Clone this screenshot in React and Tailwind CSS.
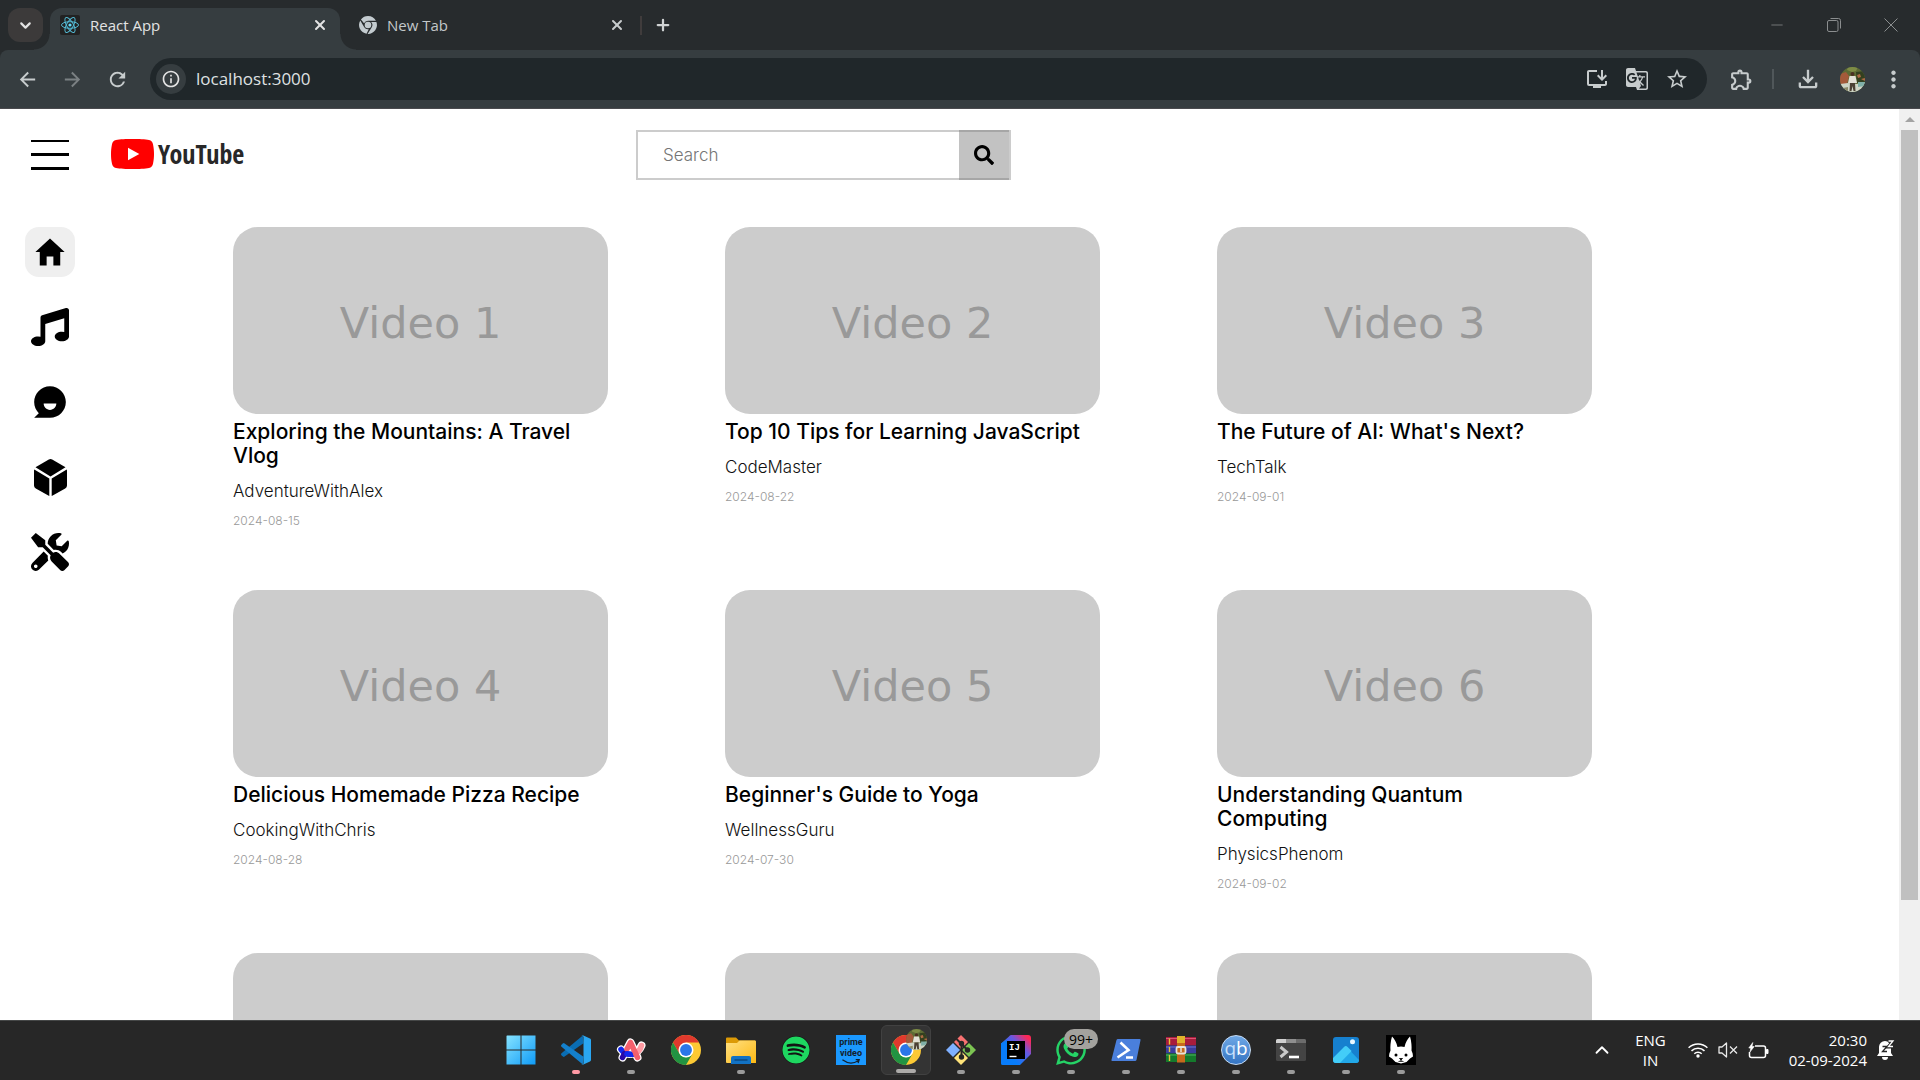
import { FaMusic, FaTools, FaSearch, FaSpotify, FaWhatsapp } from "react-icons/fa";
import {
  MdArrowBack,
  MdArrowForward,
  MdRefresh,
  MdInfoOutline,
  MdInstallDesktop,
  MdGTranslate,
  MdStarBorder,
  MdOutlineExtension,
  MdOutlineFileDownload,
  MdMoreVert,
} from "react-icons/md";
import { IoMdHome } from "react-icons/io";
import { RiChatSmile3Fill } from "react-icons/ri";
import { ChevronDown, ChevronUp, X, Plus, Minus } from "lucide-react";

const videos = [
  { id: 1, label: "Video 1", title: "Exploring the Mountains: A Travel Vlog", author: "AdventureWithAlex", date: "2024-08-15" },
  { id: 2, label: "Video 2", title: "Top 10 Tips for Learning JavaScript", author: "CodeMaster", date: "2024-08-22" },
  { id: 3, label: "Video 3", title: "The Future of AI: What's Next?", author: "TechTalk", date: "2024-09-01" },
  { id: 4, label: "Video 4", title: "Delicious Homemade Pizza Recipe", author: "CookingWithChris", date: "2024-08-28" },
  { id: 5, label: "Video 5", title: "Beginner's Guide to Yoga", author: "WellnessGuru", date: "2024-07-30" },
  { id: 6, label: "Video 6", title: "Understanding Quantum Computing", author: "PhysicsPhenom", date: "2024-09-02" },
  { id: 7 },
  { id: 8 },
  { id: 9 },
];

function ReactIcon() {
  return (
    <svg viewBox="0 0 20 20" className="size-5 rounded-[2px] bg-[#222222]" fill="none" stroke="#53b9d3" strokeWidth="1">
      <ellipse cx="10" cy="10" rx="8.5" ry="3.3" />
      <ellipse cx="10" cy="10" rx="8.5" ry="3.3" transform="rotate(60 10 10)" />
      <ellipse cx="10" cy="10" rx="8.5" ry="3.3" transform="rotate(120 10 10)" />
      <circle cx="10" cy="10" r="1.6" fill="#61dafb" stroke="none" />
    </svg>
  );
}

function ChromeMono() {
  return (
    <svg viewBox="0 0 24 24" className="size-[18px]" fill="#c3cbcf">
      <circle cx="12" cy="12" r="4.4" />
      <path d="M12 0a12 12 0 0 1 10.6 6.4H12A5.8 5.8 0 0 0 6.7 9.8L2.6 4.6A12 12 0 0 1 12 0z" />
      <path d="M1.700 5.900L7 15a5.800 5.800 0 0 0 6 2.700l-3 6.100A12 12 0 0 1 1.700 5.900z" />
      <path d="M23.200 7.900a12 12 0 0 1-11.700 16.100L17 14.900a5.800 5.800 0 0 0-.8-7z" />
    </svg>
  );
}

function Cube() {
  return (
    <svg viewBox="0 0 33 37" className="h-[37px] w-[33px]" fill="black">
      <path d="M14.800 .5a3.500 3.500 0 0 1 3.400 0L31.500 8.300 16.500 17.400 1.500 8.300z" />
      <path d="M.3 10.400L15.300 19.500V37a4 4 0 0 1-1-.4L1.800 29.400A3.500 3.500 0 0 1 0 26.400V11.800c0-.5.1-1 .3-1.400z" />
      <path d="M32.700 10.400L17.700 19.500V37a4 4 0 0 0 1-.4l12.500-7.200a3.500 3.500 0 0 0 1.800-3V11.800c0-.5-.1-1-.3-1.400z" />
    </svg>
  );
}

function Avatar({ className }) {
  return (
    <svg viewBox="0 0 25 25" className={className}>
      <clipPath id="face">
        <circle cx="12.500" cy="12.500" r="12.500" />
      </clipPath>
      <g clipPath="url(#face)">
        <rect width="25" height="25" fill="#5d6b35" />
        <path d="M0 7l6-2 3 4-2 8H0z" fill="#a45a3a" />
        <path d="M8 0h10l-2 4-4 1-5-2z" fill="#7d8b45" />
        <path d="M16 5l9-1v11l-8 1z" fill="#33401f" />
        <path d="M17 8l3-1 1 3-3 1zM21 12l4-1v3z" fill="#b06a45" />
        <path d="M0 17l8-1 9 1 8-2v10H0z" fill="#cfd5c6" />
        <path d="M18 15h7v4l-7 1z" fill="#7fb0a8" />
        <path d="M3 21l5-1v5H5z" fill="#8b8a6a" />
        <circle cx="12.500" cy="7" r="2" fill="#4a3022" />
        <path d="M9.500 9h6l1.500 7h-9z" fill="#e2e0d6" />
        <path d="M10 16h5l.5 8h-2l-1-5-1 5h-2z" fill="#4b4034" />
      </g>
    </svg>
  );
}

function Windows() {
  return (
    <svg viewBox="0 0 30 30" className="size-[30px]">
      <defs>
        <linearGradient id="win" x1="0" y1="0" x2="1" y2="1" gradientUnits="objectBoundingBox">
          <stop offset="0" stopColor="#86e3ff" />
          <stop offset="1" stopColor="#0f9bf7" />
        </linearGradient>
      </defs>
      <path fill="url(#win)" d="M1 .5h13.500v14H.5V1zM15.500 .5h14v14h-14zM.5 15.500h14v14H.5zM15.500 15.500h14v14h-14z" />
    </svg>
  );
}

function VSCode() {
  return (
    <svg viewBox="0 0 30 30" className="size-[30px]">
      <path d="M22.500 8.300L3.600 21.600a1.400 1.400 0 0 1-1.700-.1L.5 20.200a1.300 1.300 0 0 1 0-1.900L21.800 .4z" fill="#0a6db3" />
      <path d="M.5 11.700a1.300 1.300 0 0 1 0-1.900l1.400-1.300a1.400 1.400 0 0 1 1.700-.1L22.500 21.700l-.7 7.900z" fill="#1480cc" />
      <path d="M21.800 .3L29 3.500a1.800 1.800 0 0 1 1 1.700v19.600a1.800 1.800 0 0 1-1 1.700l-7.200 3.200c-.8.2-1-.2-1.400-.6 1 .9 2.100.2 2.100-1V2.200c0-1.300-1.200-2-2.100-1 .4-.4.600-.8 1.400-.9z" fill="#2aa7f2" />
    </svg>
  );
}

function Arc() {
  return (
    <svg viewBox="0 0 30 30" className="size-[30px]" fill="none" strokeLinecap="round" strokeLinejoin="round">
      <g stroke="#ffffff" strokeWidth="8">
        <path d="M6.500 22.500L14.500 7.500l7 15" />
        <path d="M5 14.500c5 7 16.500 6 20.500-4" />
      </g>
      <path d="M10 14h9v6h-9z" fill="#ffffff" />
      <path stroke="#ff9aa2" strokeWidth="5.500" d="M18 19c4-1.500 6.500-4.500 7.500-8.500" />
      <path stroke="#1429ee" strokeWidth="5.500" d="M5 14.500c3.500 4.500 8 5.500 13 4.500" />
      <path stroke="#2a0aa8" strokeWidth="5.500" d="M6.500 22.500l2-4" />
      <path stroke="#f5606c" strokeWidth="5.500" d="M11 14L14.500 7.500l7 15" />
      <path stroke="#1429ee" strokeWidth="5.500" d="M11 18.800l3 .6" />
    </svg>
  );
}

function Chrome() {
  return (
    <svg viewBox="0 0 48 48" className="size-[30px]">
      <circle cx="24" cy="24" r="24" fill="#fcc934" />
      <path d="M24 12h20.800A24 24 0 0 0 3.200 12l10.400 18z" fill="#e0392d" />
      <path d="M34.400 30L24 48A24 24 0 0 1 3.200 12l10.400 18c4 7 16 8 20.800 0z" fill="#229342" />
      <circle cx="24" cy="24" r="12" fill="#fff" />
      <circle cx="24" cy="24" r="9.500" fill="#2b76e8" />
    </svg>
  );
}

function Folder() {
  return (
    <svg viewBox="0 0 30 30" className="size-[30px]">
      <defs>
        <linearGradient id="fold" x1="0" y1="0" x2="1" y2="1">
          <stop offset="0" stopColor="#ffe083" />
          <stop offset="1" stopColor="#fdb913" />
        </linearGradient>
      </defs>
      <path d="M0 3.500a1 1 0 0 1 1-1h9l3 3h16v6H0z" fill="#dc9a06" />
      <path d="M0 8h11l2.500-2.500H29a1 1 0 0 1 1 1V28H1a1 1 0 0 1-1-1z" fill="url(#fold)" />
      <path d="M5 29v-6a2 2 0 0 1 2-2h16a2 2 0 0 1 2 2v6z" fill="#1272c4" />
      <path d="M8.500 25h13" stroke="#0a4377" strokeWidth="1.300" />
    </svg>
  );
}

function Prime() {
  return (
    <span className="flex size-[30px] flex-col items-center bg-[#1a98ff] pt-[2px] font-['Roboto'] text-[9px] leading-[11px] font-bold text-[#14202c]">
      <span>prime</span>
      <span>video</span>
      <svg viewBox="0 0 24 7" className="h-[6px] w-6 shrink-0" fill="none" stroke="#14202c" strokeWidth="1.500">
        <path d="M2 1c6 4.500 13 4.500 18.500 1M17.500 .8h4l-1.200 4" />
      </svg>
    </span>
  );
}

function ChromeProfile() {
  return (
    <span className="relative">
      <Chrome />
      <Avatar className="absolute -top-[6px] left-[15px] size-[21px]" />
    </span>
  );
}

function Git() {
  return (
    <svg viewBox="0 0 30 30" className="size-[30px]">
      <path d="M15 0l7 7-7 7-7-7z" fill="#f87171" />
      <path d="M7 8l7 7-7 7-7-7z" fill="#7fb0ff" />
      <path d="M23 8l7 7-7 7-7-7z" fill="#7cc452" />
      <path d="M15 16l7 7-7 7-7-7z" fill="#ffe37a" />
      <g stroke="#262626" strokeWidth="2" fill="#262626">
        <path d="M10.500 4l5 5v12M15.500 9l6 6" fill="none" />
        <circle cx="15.500" cy="8.500" r="1.700" />
        <circle cx="15.500" cy="22" r="1.700" />
        <circle cx="21.500" cy="15" r="1.700" />
      </g>
    </svg>
  );
}

function IntelliJ() {
  return (
    <svg viewBox="0 0 30 30" className="size-[30px]">
      <defs>
        <linearGradient id="ij" x1="0" y1="1" x2="1" y2="0">
          <stop offset=".3" stopColor="#087cfa" />
          <stop offset=".65" stopColor="#6b57e0" />
          <stop offset=".9" stopColor="#fe2857" />
        </linearGradient>
      </defs>
      <path d="M8 1.500A3 3 0 0 1 11 0h16a3 3 0 0 1 3 3v16L19 30H2a2 2 0 0 1-2-2V8.500z" fill="url(#ij)" />
      <path d="M0 8.500L6 5v20l9 5H2a2 2 0 0 1-2-2z" fill="#087cfa" />
      <rect x="6" y="6" width="18" height="18" fill="#000" />
      <path d="M8.500 21.500h7" stroke="#fff" strokeWidth="1.400" />
      <text x="8" y="14.500" fill="#fff" fontSize="9" fontWeight="700" fontFamily="Liberation Mono, monospace">IJ</text>
    </svg>
  );
}

function WhatsApp() {
  return (
    <span className="relative">
      <FaWhatsapp className="size-[34px] text-[#25d366]" />
      <span className="absolute -top-1 left-2.5 flex h-5 items-center rounded-full bg-[#a3a29e] px-[5px] text-[14px] text-black">99+</span>
    </span>
  );
}

function PowerShell() {
  return (
    <svg viewBox="0 0 30 30" className="size-[30px]">
      <path d="M7 4h21.500a1 1 0 0 1 1 1.300L25.500 25a1.500 1.500 0 0 1-1.400 1H1.500a1 1 0 0 1-1-1.300L5.500 5A1.500 1.500 0 0 1 7 4z" fill="#4a7fdc" />
      <path d="M9.500 7.500l8 7.500L6.500 22.500M15 22.500h7" stroke="#fff" strokeWidth="2.600" fill="none" />
    </svg>
  );
}

function WinRar() {
  return (
    <svg viewBox="0 0 30 30" className="size-[30px]">
      <rect y="2" width="30" height="8.500" fill="#a81c3c" />
      <rect y="10.500" width="30" height="8" fill="#3b3c9e" />
      <rect y="18.500" width="30" height="8.500" fill="#147a2c" />
      <path d="M0 3.500h30" stroke="#d95575" />
      <path d="M0 12h30" stroke="#6f73d0" />
      <path d="M0 20h30" stroke="#4bb45d" />
      <path d="M3.500 3.500v6M3.500 12v5M3.500 20v6" stroke="#e9c53a" strokeWidth="1.400" />
      <rect x="11" y="1" width="8" height="26.500" fill="#c76a1c" />
      <rect x="11" y="1" width="8" height="7" fill="#e0b32b" />
      <rect x="10.500" y="12" width="9" height="6.500" rx="1.500" fill="none" stroke="#e8e4da" strokeWidth="1.800" />
      <path d="M15 13v4" stroke="#e8e4da" strokeWidth="1.500" />
    </svg>
  );
}

function QBit() {
  return (
    <span className="flex size-[30px] items-center justify-center rounded-full border border-[#c6dcf5] bg-linear-to-b from-[#6fa8e6] to-[#3474c2] pb-1 text-[19px] leading-none">
      <span className="text-[#c9e0fb]">q</span>
      <span className="text-white">b</span>
    </span>
  );
}

function Terminal() {
  return (
    <svg viewBox="0 0 30 30" className="size-[30px]">
      <rect y="4" width="30" height="22" rx="1.500" fill="#444444" />
      <path d="M1.500 4H10v4H0V5.500A1.500 1.500 0 0 1 1.500 4z" fill="#d0d0d0" />
      <path d="M10 4h10v4H10z" fill="#8f8f8f" />
      <path d="M20 4h8.500A1.500 1.500 0 0 1 30 5.500V8H20z" fill="#6c6c6c" />
      <path d="M4.500 12l6 5-6 5" stroke="#c9c9c9" strokeWidth="3" fill="none" />
      <path d="M13 22h10" stroke="#fff" strokeWidth="2.600" />
    </svg>
  );
}

function Photos() {
  return (
    <svg viewBox="0 0 30 30" className="size-[30px]">
      <rect x="2" y="2" width="26" height="26" rx="3" fill="#1680cf" />
      <path d="M2.500 24.500L13 13a2.500 2.500 0 0 1 3.600 0L28 25a3 3 0 0 1-3 3H5a3 3 0 0 1-2.500-3.500z" fill="#22a8e8" />
      <path d="M2 23L13 12a2.500 2.500 0 0 1 3.600 0l4 4L9 28H5a3 3 0 0 1-3-3z" fill="#43cdf8" />
      <circle cx="21.500" cy="6.800" r="2.500" fill="#e9f7ff" />
    </svg>
  );
}

function Cat() {
  return (
    <svg viewBox="0 0 30 30" className="size-[30px]">
      <rect width="30" height="30" fill="#000" />
      <path d="M6 1.500c2.500 2.500 4.500 6 5.500 10.500 2-.8 5-.8 7 0 1-4.500 3-8 5.500-10.500 1.500 5 1.800 10 1.500 14 1 2 1.500 4 1.500 6l-3 2-3.500 3.500-5.500 1.500-5.500-1.500L6 23.500l-3-2c0-2 .5-4 1.500-6-.3-4 0-9 1.500-14z" fill="#fff" />
      <circle cx="10" cy="20" r="1.500" fill="#000" />
      <circle cx="20" cy="20" r="1.500" fill="#000" />
      <path d="M13.500 23.500h3L15 25zM15 25v1.500M12.500 26.500l2.500-.5 2.500.5" stroke="#000" strokeWidth=".8" />
    </svg>
  );
}

function Spotify() {
  return <FaSpotify className="size-7 rounded-full bg-[#131313] text-[#1ed760]" />;
}

const apps = [
  { name: "Start", Icon: Windows },
  { name: "Visual Studio Code", Icon: VSCode, mark: "w-2 bg-[#ff99a4]" },
  { name: "Arc", Icon: Arc, mark: "w-2 bg-[#9b9b9b]" },
  { name: "Chrome", Icon: Chrome },
  { name: "File Explorer", Icon: Folder, mark: "w-2 bg-[#9b9b9b]" },
  { name: "Spotify", Icon: Spotify },
  { name: "Prime Video", Icon: Prime },
  { name: "Chrome profile", Icon: ChromeProfile, mark: "w-5 bg-[#adaba9]", active: true },
  { name: "Git", Icon: Git, mark: "w-2 bg-[#9b9b9b]" },
  { name: "IntelliJ IDEA", Icon: IntelliJ, mark: "w-2 bg-[#9b9b9b]" },
  { name: "WhatsApp", Icon: WhatsApp, mark: "w-2 bg-[#9b9b9b]" },
  { name: "PowerShell", Icon: PowerShell, mark: "w-2 bg-[#9b9b9b]" },
  { name: "WinRAR", Icon: WinRar, mark: "w-2 bg-[#9b9b9b]" },
  { name: "qBittorrent", Icon: QBit, mark: "w-2 bg-[#9b9b9b]" },
  { name: "Terminal", Icon: Terminal, mark: "w-2 bg-[#9b9b9b]" },
  { name: "Photos", Icon: Photos, mark: "w-2 bg-[#9b9b9b]" },
  { name: "Cat", Icon: Cat, mark: "w-2 bg-[#9b9b9b]" },
];

function TabStrip() {
  return (
    <div className="flex h-[50px] shrink-0 items-stretch bg-[#272b2d]">
      <button aria-label="Search tabs" className="mt-2 ml-2 flex h-[34px] w-[35px] items-center justify-center rounded-xl bg-[#3c3a3a] text-[#e3e3e3]">
        <ChevronDown size={17} strokeWidth={3} />
      </button>
      <div className="relative mt-2 ml-[7px] flex w-[290px] items-center gap-[10px] rounded-t-xl bg-[#363d40] pr-3 pb-2 pl-[10px]">
        <span className="absolute bottom-0 -left-4 size-4 bg-[radial-gradient(circle_at_0_0,transparent_15px,#363d40_16px)]" />
        <span className="absolute -right-4 bottom-0 size-4 bg-[radial-gradient(circle_at_100%_0,transparent_15px,#363d40_16px)]" />
        <ReactIcon />
        <span className="flex-1 text-[15px] text-[#e3e3e3]">React App</span>
        <button aria-label="Close React App" className="text-[#e3e3e3]">
          <X size={16} strokeWidth={3} />
        </button>
      </div>
      <div className="mt-2 flex w-[300px] items-center gap-[10px] pr-[15px] pb-2 pl-[19px]">
        <ChromeMono />
        <span className="flex-1 text-[15px] text-[#c3c7c9]">New Tab</span>
        <button aria-label="Close New Tab" className="text-[#c8cccd]">
          <X size={16} strokeWidth={3} />
        </button>
      </div>
      <span className="mt-4 h-[19px] w-[2px] bg-[#403c3c]" />
      <button aria-label="New tab" className="mb-[1px] ml-3 text-[#d0d3d4]">
        <Plus size={18} strokeWidth={3} />
      </button>
      <div className="ml-auto flex items-start pr-[1px] text-[#8b8e8f]">
        <button aria-label="Minimize" className="flex h-[49px] w-[57px] items-center justify-center">
          <Minus size={18} strokeWidth={1} />
        </button>
        <button aria-label="Restore" className="flex h-[49px] w-[57px] items-center justify-center">
          <svg viewBox="0 0 14 14" className="size-[14px]" fill="none" stroke="currentColor">
            <rect x=".5" y="2.500" width="10.500" height="11" rx="1.500" />
            <path d="M3.500 .5h8a2 2 0 0 1 2 2v8" />
          </svg>
        </button>
        <button aria-label="Close" className="flex h-[49px] w-[57px] items-center justify-center">
          <svg viewBox="0 0 14 14" className="size-[14px]" fill="none" stroke="currentColor">
            <path d="M.5.5l13 13M13.500.5l-13 13" />
          </svg>
        </button>
      </div>
    </div>
  );
}

function Toolbar() {
  return (
    <div className="shrink-0 bg-[#272b2d]">
      <div className="flex h-[59px] items-center rounded-t-lg border-b border-[#4a4a4e] bg-[#363d40] text-[#c7cccd]">
        <button aria-label="Back" className="ml-4">
          <MdArrowBack size={23} />
        </button>
        <button aria-label="Forward" className="ml-[22px] text-[#7b8183]">
          <MdArrowForward size={23} />
        </button>
        <button aria-label="Reload" className="ml-[22px]">
          <MdRefresh size={23} />
        </button>
        <div className="ml-[21px] flex h-[42px] flex-1 items-center rounded-full bg-[#20272a] pr-[18px] pl-[6px]">
          <button aria-label="Site information" className="flex size-[30px] items-center justify-center rounded-full bg-[#363d40] text-[#e3e3e3]">
            <MdInfoOutline size={20} />
          </button>
          <input
            aria-label="Address"
            defaultValue="localhost:3000"
            className="ml-[10px] min-w-0 flex-1 bg-transparent text-[17px] text-[#dfe1e2] outline-none"
          />
          <div className="flex items-center gap-4">
            <button aria-label="Install app"><MdInstallDesktop size={24} /></button>
            <button aria-label="Translate"><MdGTranslate size={24} /></button>
            <button aria-label="Bookmark"><MdStarBorder size={24} /></button>
          </div>
        </div>
        <button aria-label="Extensions" className="ml-[22px]">
          <MdOutlineExtension size={25} />
        </button>
        <span className="mr-5 ml-[18px] h-5 w-[2px] bg-[#50575a]" />
        <button aria-label="Downloads">
          <MdOutlineFileDownload size={28} />
        </button>
        <button aria-label="Profile" className="ml-[18px]">
          <Avatar className="size-[25px]" />
        </button>
        <button aria-label="Menu" className="mr-[13px] ml-[15px]">
          <MdMoreVert size={27} />
        </button>
      </div>
    </div>
  );
}

function PageHeader() {
  return (
    <header className="flex items-center pt-[21px] pl-[31px]">
      <button aria-label="Menu" className="flex w-[38px] flex-col gap-[11px]">
        <span className="h-[2px] bg-black" />
        <span className="h-[3px] bg-black" />
        <span className="h-[3px] bg-black" />
      </button>
      <a href="#home" className="mb-[3px] ml-[42px] flex h-[34px] w-[136px] items-center gap-1">
        <svg viewBox="0 0 43 30" className="h-[30px] w-[43px] shrink-0">
          <path d="M21.500 0c6 0 13 .2 16.500 1 2.300.5 3.600 2 4 4.200.8 4 1 6.500 1 9.800s-.2 5.800-1 9.800c-.4 2.200-1.700 3.700-4 4.200-3.500.8-10.500 1-16.500 1S8.500 29.800 5 29c-2.300-.5-3.600-2-4-4.200-.8-4-1-6.500-1-9.800s.2-5.800 1-9.800C1.400 3 2.700 1.500 5 1 8.500.2 15.500 0 21.500 0z" fill="#ff0000" />
          <path d="M17 8.700v12.600L28.300 15z" fill="#fff" />
        </svg>
        <span className="font-['Open_Sans_Condensed'] text-[26px] leading-[34px] font-bold text-[#282828]">YouTube</span>
      </a>
      <form className="ml-[389px] flex h-[50px] w-[375px] border-2 border-[#cccccc]" onSubmit={(e) => e.preventDefault()}>
        <input
          type="search"
          aria-label="Search"
          placeholder="Search"
          className="min-w-0 flex-1 px-[25px] pt-[2px] font-['Inter'] text-[17px] font-light outline-none placeholder:text-[#757575]"
        />
        <button aria-label="Submit search" className="-my-[2px] flex w-[50px] items-center justify-center border-y-2 border-[#a6a6a6] bg-[#c2c2c2]">
          <FaSearch size={20} />
        </button>
      </form>
    </header>
  );
}

function Sidebar() {
  const item = "flex size-[50px] items-center justify-center rounded-[14px]";
  return (
    <nav className="ml-[25px] flex flex-col gap-[25px]">
      <a href="#home" aria-label="Home" className={`${item} bg-[#efefef]`}><IoMdHome size={36} /></a>
      <a href="#music" aria-label="Music" className={item}><FaMusic size={38} /></a>
      <a href="#chat" aria-label="Comedy" className={item}><RiChatSmile3Fill size={38} /></a>
      <a href="#blocks" aria-label="Models" className={item}><Cube /></a>
      <a href="#tools" aria-label="Tools" className={item}><FaTools size={38} /></a>
    </nav>
  );
}

function VideoCard({ label, title, author, date }) {
  return (
    <article className="font-['Inter']">
      <div className="flex h-[187px] items-center justify-center rounded-[25px] bg-[#cccccc] pt-[6px] font-['DejaVu_Sans'] text-[43px] leading-none text-[#999999]">
        {label}
      </div>
      {title && (
        <>
          <h2 className="mt-[6px] pr-4 text-[21px] leading-6 font-medium text-black">{title}</h2>
          <p className="mt-[14px] text-[17px] leading-[19px] font-light text-[#111111]">{author}</p>
          <p className="mt-3 text-[12px] leading-[15px] font-light text-[#999999]">{date}</p>
        </>
      )}
    </article>
  );
}

function Scrollbar() {
  return (
    <div aria-hidden="true" className="flex w-[21px] shrink-0 flex-col items-center bg-[#f0f0f0]">
      <span className="flex h-[21px] shrink-0 items-center">
        <span className="border-x-[5px] border-b-[5px] border-x-transparent border-b-[#a3a3a3]" />
      </span>
      <span className="h-[84.5%] w-[17px] bg-[#c0c0c0]" />
    </div>
  );
}

function Tray() {
  return (
    <div className="flex items-center justify-end pr-[25px] text-white">
      <button aria-label="Hidden icons"><ChevronUp size={22} strokeWidth={2} /></button>
      <button className="ml-[22px] text-center text-[15px] leading-5">
        ENG
        <br />
        IN
      </button>
      <button aria-label="Quick settings" className="ml-[22px] flex items-center gap-[10px]">
        <svg viewBox="0 0 20 16" className="h-4 w-5" fill="none" stroke="#fff" strokeWidth="1.500">
          <path d="M.6 5.800a13.500 13.500 0 0 1 18.800 0M3.500 8.900a9.300 9.300 0 0 1 13 0M6.300 11.700a5.300 5.300 0 0 1 7.400 0" />
          <circle cx="10" cy="14" r="1.700" fill="#fff" stroke="none" />
        </svg>
        <svg viewBox="0 0 20 16" className="h-4 w-5" fill="none" stroke="#e8e8e8" strokeWidth="1.300">
          <path d="M1 5h3l4.500-4v14L4 11H1z" strokeLinejoin="round" />
          <path d="M12 4.500l7 7M19 4.500l-7 7" />
        </svg>
        <svg viewBox="0 0 21 17" className="h-[17px] w-[21px]" fill="none" stroke="#fff" strokeWidth="1.500">
          <path d="M7 4h8.500a2 2 0 0 1 2 2v7.500a2 2 0 0 1-2 2H3.500a2 2 0 0 1-2-2V10" />
          <path d="M18.500 7.500v4h1.500v-4z" fill="#fff" strokeWidth="1" />
          <path d="M4.800.5L.8 6h2L2 10l4.200-5.500H4z" fill="#fff" strokeWidth=".6" />
        </svg>
      </button>
      <button className="ml-5 text-right text-[15px] leading-5">
        20:30
        <br />
        02-09-2024
      </button>
      <button aria-label="Notifications" className="ml-[10px]">
        <svg viewBox="0 0 18 20" className="h-5 w-[18px]">
          <path d="M8 1a6 6 0 0 1 6 6v6l2 3H0l2-3V7a6 6 0 0 1 6-6zM5 17h6a3 3 0 0 1-6 0z" fill="#fff" />
          <path d="M5.500 6.500h4.500l-4.500 5H10" stroke="#272727" strokeWidth="1.300" fill="none" />
          <path d="M11 1h5l-5 6h5" stroke="#272727" strokeWidth="3" fill="none" />
          <path d="M11.500 1h4.500l-4.500 5.500H16" stroke="#fff" strokeWidth="1.300" fill="none" />
        </svg>
      </button>
    </div>
  );
}

function Taskbar() {
  return (
    <footer className="grid h-[60px] shrink-0 grid-cols-[1fr_auto_1fr] border-t border-[#454747] bg-[#272727] pb-[1px]">
      <span />
      <div className="flex items-center pl-[2px]">
        {apps.map(({ name, Icon, mark, active }) => (
          <button key={name} aria-label={name} className="flex w-[55px] justify-center">
            <span className={`relative flex size-[50px] items-center justify-center rounded-md ${active ? "border border-[#414141] bg-[#343434]" : ""}`}>
              <Icon />
              {mark && <span className={`absolute bottom-[1px] h-1 rounded-full ${mark}`} />}
            </span>
          </button>
        ))}
      </div>
      <Tray />
    </footer>
  );
}

export default function App() {
  return (
    <div className="flex h-screen flex-col overflow-hidden bg-white font-['Open_Sans',sans-serif]">
      <TabStrip />
      <Toolbar />
      <div className="flex min-h-0 flex-1">
        <div className="min-w-0 flex-1 overflow-hidden">
          <PageHeader />
          <div className="mt-[47px] flex items-start">
            <Sidebar />
            <main className="mr-[307px] ml-[158px] grid flex-1 grid-cols-[repeat(3,375px)] justify-between gap-y-[62px]">
              {videos.map((v) => (
                <VideoCard key={v.id} {...v} />
              ))}
            </main>
          </div>
        </div>
        <Scrollbar />
      </div>
      <Taskbar />
    </div>
  );
}
